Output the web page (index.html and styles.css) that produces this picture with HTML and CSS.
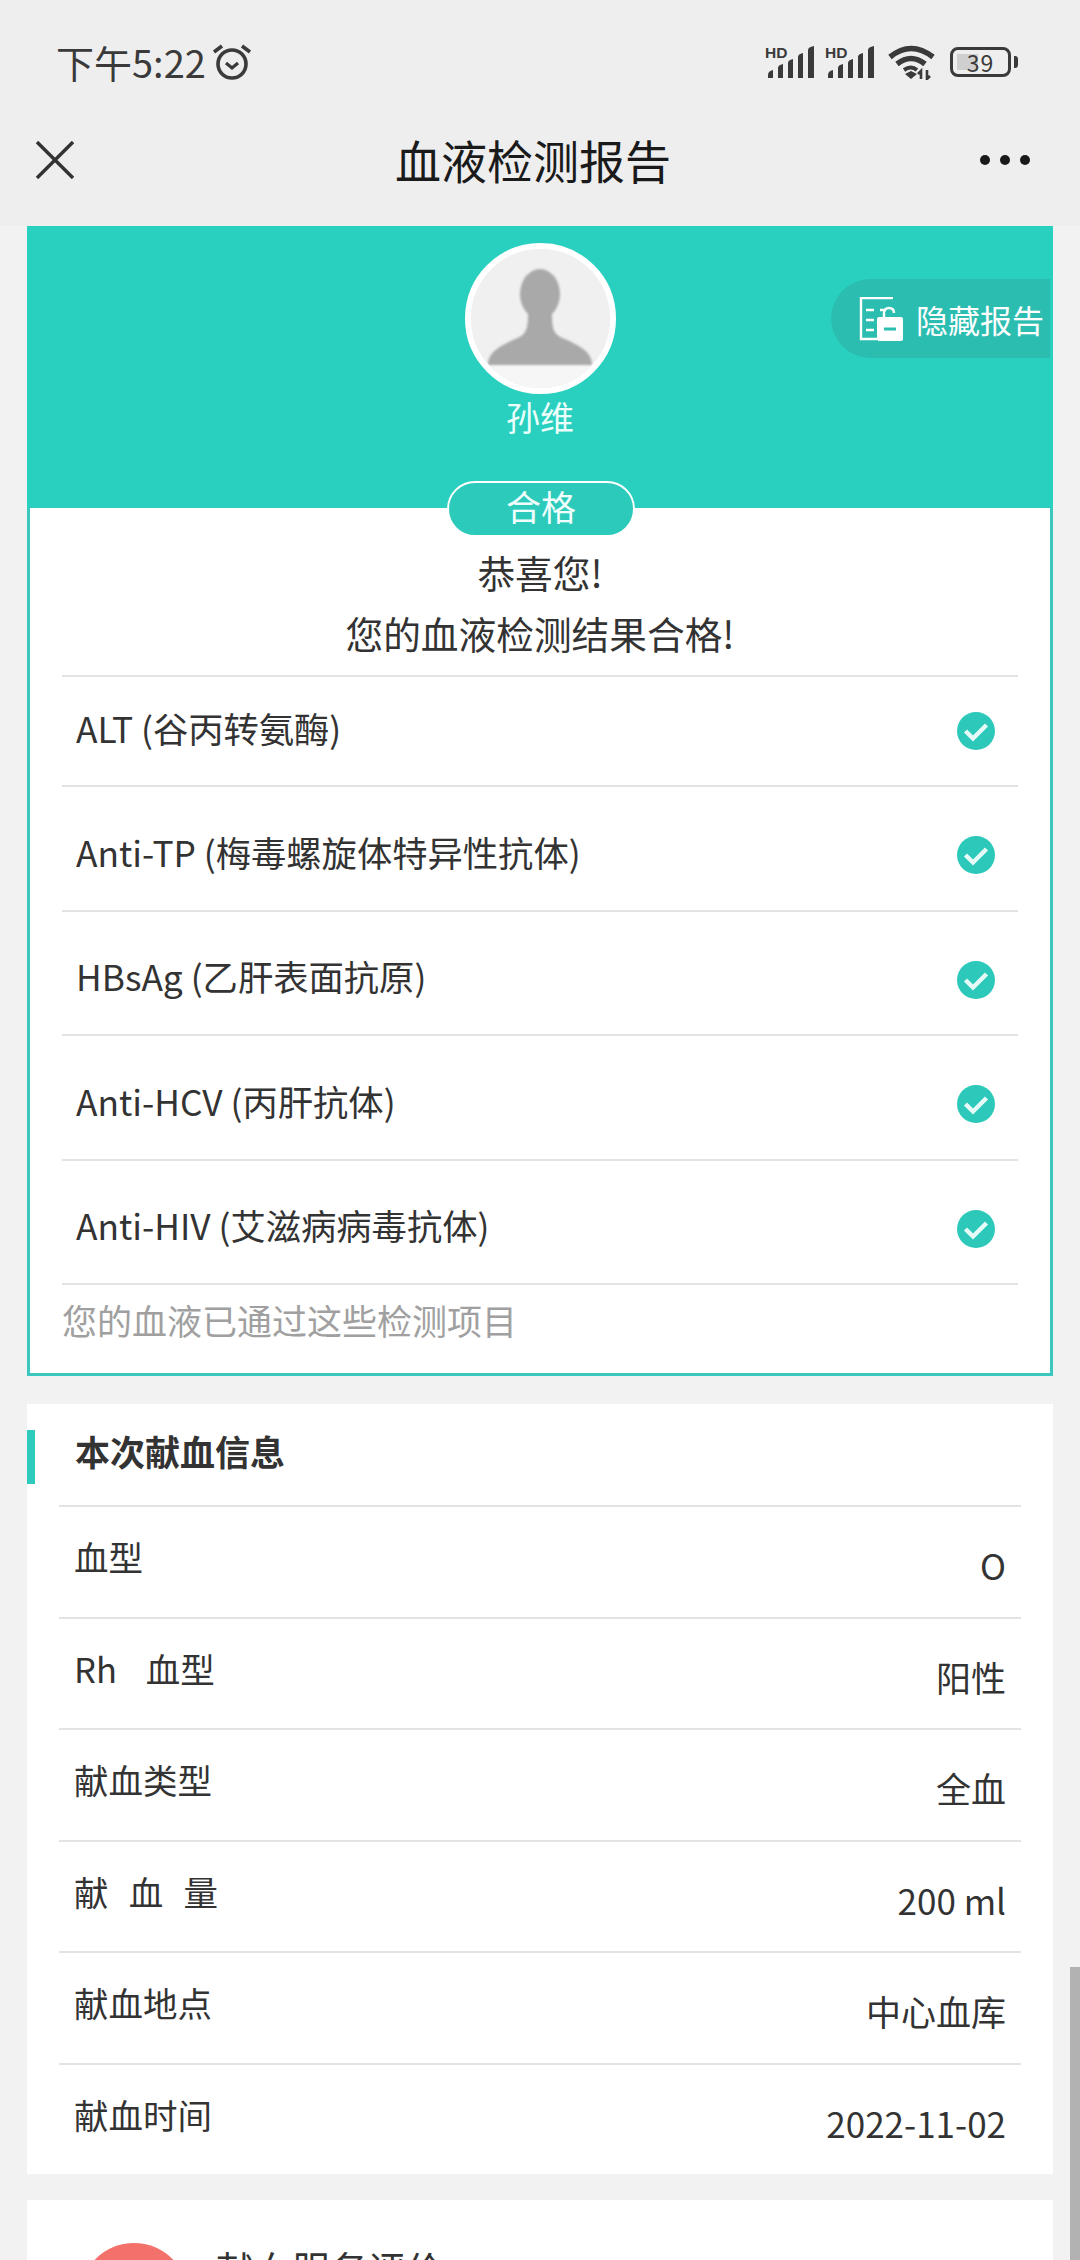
FILE: index.html
```html
<!DOCTYPE html>
<html lang="zh-CN">
<head>
    <meta charset="UTF-8">
    <meta name="viewport" content="width=device-width, initial-scale=1">
    <title>血液检测报告</title>
    <link rel="stylesheet" href="styles.css">
</head>
<body>
    <div class="topbar">
        <div class="status-bar">
            <div class="status-left">
                <span class="clock">下午5:22</span>
                <svg class="alarm" viewBox="0 0 40 38" width="40" height="38" fill="none" stroke="#3a3a3a">
                    <circle cx="20" cy="21" r="14" stroke-width="3.6"/>
                    <path d="M14 20l6 5 6-5" stroke-width="3.2"/>
                    <path d="M2 9l8-6M38 9l-8-6" stroke-width="3.6"/>
                </svg>
            </div>
            <div class="status-right">
                <svg class="signal" viewBox="0 0 50 32" width="50" height="32" fill="#3a3a3a">
                    <text x="0" y="12" class="hd">HD</text>
                    <path d="M3 32v-3q0-4 5-5v8zM13 32V22q0-3 5-4v14zM23 32V17q0-3 5-4v19zM33 32V11q0-3 5-4v25zM43 32V4q0-3 6-4v32z"/>
                </svg>
                <svg class="signal" viewBox="0 0 50 32" width="50" height="32" fill="#3a3a3a">
                    <text x="0" y="12" class="hd">HD</text>
                    <path d="M3 32v-3q0-4 5-5v8zM13 32V22q0-3 5-4v14zM23 32V17q0-3 5-4v19zM33 32V11q0-3 5-4v25zM43 32V4q0-3 6-4v32z"/>
                </svg>
                <svg class="wifi" viewBox="0 0 47 35" width="47" height="35" fill="none" stroke="#3a3a3a" stroke-width="5.5">
                    <path d="M2 12q21-17 43 0"/>
                    <path d="M9 19q14-11 28 0"/>
                    <path d="M16 25q7-5 13 0" stroke-width="4"/>
                    <path d="M17 29l6-3 6 3-6 5z" fill="#3a3a3a" stroke="none"/>
                    <path d="M33 34v-8l-3 3M39 25v9l3-3" stroke-width="2.6"/>
                </svg>
                <div class="battery">
                    <div class="battery-box">
                        <div class="battery-level"></div>
                        <span class="battery-num">39</span>
                    </div>
                    <div class="battery-tip"></div>
                </div>
            </div>
        </div>
        <div class="nav">
            <svg viewBox="0 0 38 38" width="38" height="38" stroke="#333" stroke-width="3.4">
                <path d="M1 1l36 36M37 1L1 37"/>
            </svg>
            <div class="nav-title">血液检测报告</div>
            <div class="dots"><i></i><i></i><i></i></div>
        </div>
    </div>

    <div class="report-card">
        <div class="report-head">
            <div class="avatar">
                <svg viewBox="0 0 140 140" width="140" height="140">
                    <rect width="140" height="140" fill="#f0f0f0"/>
                    <rect y="117" width="140" height="23" fill="#f6f6f6"/>
                    <g fill="#a9a9a9" class="silhouette">
                        <ellipse cx="70" cy="46" rx="20" ry="25"/>
                        <path d="M18 117C18 104 30 98 45 91C56 87 58 82 58 66L82 66C82 82 84 87 95 91C110 98 122 104 122 117Z"/>
                    </g>
                </svg>
            </div>
            <div class="person-name">孙维</div>
            <div class="hide-btn">
                <svg viewBox="0 0 44 44" width="44" height="44" fill="none" stroke="#fff" stroke-width="2.4">
                    <path d="M34 1H2v41h16"/>
                    <path d="M7 13h8M7 23h8M7 33h8M21 13h6"/>
                    <path d="M25 20v-4q0-5 5-5t5 5"/>
                    <rect x="18" y="20" width="26" height="24" rx="2" fill="#fff" stroke="none"/>
                    <path d="M25 32h12" stroke="#2bbdb0" stroke-width="3"/>
                </svg>
                <span>隐藏报告</span>
            </div>
        </div>
        <div class="pass-tag">合格</div>
        <div class="pass-msg">
            <p>恭喜您!</p>
            <p>您的血液检测结果合格!</p>
        </div>
        <div class="check-list">
            <div class="check-row">
                <span>ALT (谷丙转氨酶)</span>
                <svg class="tick" viewBox="0 0 38 38" width="38" height="38"><circle cx="19" cy="19" r="19" fill="#2cc9bb"/><path d="M8.500 19l7.500 7.500 13.500-13.500" fill="none" stroke="#e6fbf8" stroke-width="4.4"/></svg>
            </div>
            <div class="check-row">
                <span>Anti-TP (梅毒螺旋体特异性抗体)</span>
                <svg class="tick" viewBox="0 0 38 38" width="38" height="38"><circle cx="19" cy="19" r="19" fill="#2cc9bb"/><path d="M8.500 19l7.500 7.500 13.500-13.500" fill="none" stroke="#e6fbf8" stroke-width="4.4"/></svg>
            </div>
            <div class="check-row">
                <span>HBsAg (乙肝表面抗原)</span>
                <svg class="tick" viewBox="0 0 38 38" width="38" height="38"><circle cx="19" cy="19" r="19" fill="#2cc9bb"/><path d="M8.500 19l7.500 7.500 13.500-13.500" fill="none" stroke="#e6fbf8" stroke-width="4.4"/></svg>
            </div>
            <div class="check-row">
                <span>Anti-HCV (丙肝抗体)</span>
                <svg class="tick" viewBox="0 0 38 38" width="38" height="38"><circle cx="19" cy="19" r="19" fill="#2cc9bb"/><path d="M8.500 19l7.500 7.500 13.500-13.500" fill="none" stroke="#e6fbf8" stroke-width="4.4"/></svg>
            </div>
            <div class="check-row">
                <span>Anti-HIV (艾滋病病毒抗体)</span>
                <svg class="tick" viewBox="0 0 38 38" width="38" height="38"><circle cx="19" cy="19" r="19" fill="#2cc9bb"/><path d="M8.500 19l7.500 7.500 13.500-13.500" fill="none" stroke="#e6fbf8" stroke-width="4.4"/></svg>
            </div>
        </div>
        <div class="check-note">您的血液已通过这些检测项目</div>
    </div>

    <div class="info-card">
        <div class="info-title">本次献血信息</div>
        <div class="info-row"><span class="info-label">血型</span><span class="info-value">O</span></div>
        <div class="info-row"><span class="info-label label-rh">Rh<b>血型</b></span><span class="info-value">阳性</span></div>
        <div class="info-row"><span class="info-label">献血类型</span><span class="info-value">全血</span></div>
        <div class="info-row"><span class="info-label label-wide">献血量</span><span class="info-value">200 ml</span></div>
        <div class="info-row"><span class="info-label">献血地点</span><span class="info-value">中心血库</span></div>
        <div class="info-row"><span class="info-label">献血时间</span><span class="info-value">2022-11-02</span></div>
    </div>

    <div class="rate-card">
        <div class="rate-icon"></div>
        <div class="rate-title">献血服务评价</div>
    </div>

    <div class="scroll-thumb"></div>
</body>
</html>
```

FILE: styles.css
```css
* {
    box-sizing: border-box;
}
html, body {
    margin: 0;
    height: 2260px;
    overflow: hidden;
}
body {
    position: relative;
    background: #f2f2f2;
    color: #333;
    font-family: "Noto Sans CJK SC", "Noto Sans", sans-serif;
}
p {
    margin: 0;
}

/* top bar */
.topbar {
    height: 226px;
    background: #eeeeee;
}
.status-bar {
    display: flex;
    justify-content: space-between;
    align-items: center;
    height: 114px;
    padding: 10px 62px 0 56px;
}
.status-left, .status-right {
    display: flex;
    align-items: center;
}
.clock {
    font-size: 38px;
    line-height: 50px;
    color: #3a3a3a;
}
.alarm {
    margin-left: 6px;
}
.status-right {
    gap: 10px;
}
.signal {
    overflow: visible;
}
.hd {
    font-family: "Liberation Sans", sans-serif;
    font-size: 15.5px;
    font-weight: bold;
}
.wifi {
    margin-left: 3px;
    margin-right: 5px;
}
.battery {
    display: flex;
    align-items: center;
    gap: 3px;
}
.battery-box {
    position: relative;
    display: flex;
    justify-content: center;
    align-items: center;
    width: 61px;
    height: 30px;
    border: 3px solid #3a3a3a;
    border-radius: 8px;
}
.battery-level {
    position: absolute;
    left: 4px;
    top: 4px;
    bottom: 4px;
    width: 21px;
    background: #cfcfcf;
}
.battery-num {
    position: relative;
    font-size: 23px;
    line-height: 24px;
    letter-spacing: 1px;
    color: #3a3a3a;
}
.battery-tip {
    width: 4px;
    height: 12px;
    background: #3a3a3a;
    border-radius: 0 3px 3px 0;
}
.nav {
    display: grid;
    grid-template-columns: 1fr auto 1fr;
    align-items: center;
    height: 112px;
    padding: 0 50px 20px 36px;
}
.nav-title {
    margin-top: -2px;
    font-size: 46px;
    line-height: 60px;
    color: #1a1a1a;
}
.dots {
    display: flex;
    justify-content: flex-end;
    gap: 10px;
}
.dots i {
    width: 10px;
    height: 10px;
    border-radius: 50%;
    background: #1a1a1a;
}

/* report card */
.report-card {
    position: relative;
    width: 1026px;
    height: 1150px;
    margin: 0 0 28px 27px;
    background: #fff;
    border: 3px solid #3cc8bc;
    border-top: none;
}
.report-head {
    position: relative;
    height: 282px;
    margin: 0 -3px;
    padding-top: 17px;
    background: #2ad0bf;
    text-align: center;
}
.avatar {
    width: 151px;
    height: 151px;
    margin: 0 auto;
    border: 6px solid #fff;
    border-radius: 50%;
    overflow: hidden;
    background: #f0f0f0;
}
.avatar svg {
    display: block;
    margin: -1px;
}
.silhouette {
    filter: blur(0.8px);
}
.person-name {
    font-size: 34px;
    line-height: 46px;
    color: #eafffb;
}
.hide-btn {
    position: absolute;
    top: 53px;
    right: 3px;
    display: flex;
    align-items: center;
    width: 219px;
    height: 79px;
    padding-left: 28px;
    background: #2bbdb0;
    border-radius: 40px 0 0 40px;
    color: #fff;
    font-size: 32px;
}
.hide-btn span {
    margin-left: 13px;
    white-space: nowrap;
}
.pass-tag {
    position: absolute;
    top: 255px;
    left: 417px;
    width: 188px;
    height: 56px;
    background: #2ccabb;
    border: 2px solid #fff;
    border-radius: 28px;
    color: #f0fffd;
    font-size: 35px;
    line-height: 46px;
    text-align: center;
}
.pass-msg {
    padding-top: 33px;
    text-align: center;
    font-size: 37.7px;
    line-height: 61px;
}
.check-list {
    margin: 12px 32px 0;
    border-top: 2px solid #e3e3e3;
}
.check-row {
    display: flex;
    justify-content: space-between;
    align-items: center;
    height: 124.5px;
    padding: 14px 23px 0 14px;
    border-bottom: 2px solid #e3e3e3;
    font-size: 35.3px;
}
.check-row:first-child {
    height: 110px;
    padding-top: 0;
}
.check-row span {
    margin-top: -8px;
}
.check-note {
    margin: 0 32px;
    padding-top: 10px;
    color: #a0a0a0;
    font-size: 35px;
    line-height: 50px;
}

/* donation info */
.info-card {
    position: relative;
    width: 1026px;
    height: 770px;
    margin: 0 0 26px 27px;
    padding: 0 32px;
    background: #fff;
}
.info-title {
    height: 101px;
    padding: 22px 16px 0;
    font-size: 35px;
    font-weight: 700;
    line-height: 50px;
}
.info-title::before {
    content: "";
    position: absolute;
    left: 0;
    top: 26px;
    width: 8px;
    height: 54px;
    background: #2ecabc;
}
.info-row {
    display: flex;
    justify-content: space-between;
    align-items: flex-start;
    height: 111.6px;
    padding: 0 15px;
    border-top: 2px solid #e3e3e3;
    font-size: 35px;
    line-height: 50px;
}
.info-label {
    margin-top: 24px;
    font-size: 34.5px;
}
.label-rh b {
    margin-left: 29px;
    font-weight: 400;
}
.info-value {
    margin-top: 33px;
}
.label-wide {
    width: 144px;
    text-align-last: justify;
}

/* service rating, cut off by the window */
.rate-card {
    display: flex;
    width: 1026px;
    height: 200px;
    margin-left: 27px;
    padding: 43px 0 0 53px;
    background: #fff;
}
.rate-icon {
    flex: none;
    width: 108px;
    height: 108px;
    border-radius: 50%;
    background: #f4706a;
}
.rate-title {
    margin-left: 28px;
    font-size: 38px;
    line-height: 50px;
}

.scroll-thumb {
    position: absolute;
    right: 0;
    top: 1967px;
    width: 10px;
    height: 293px;
    background: #b2b2b2;
}
```
